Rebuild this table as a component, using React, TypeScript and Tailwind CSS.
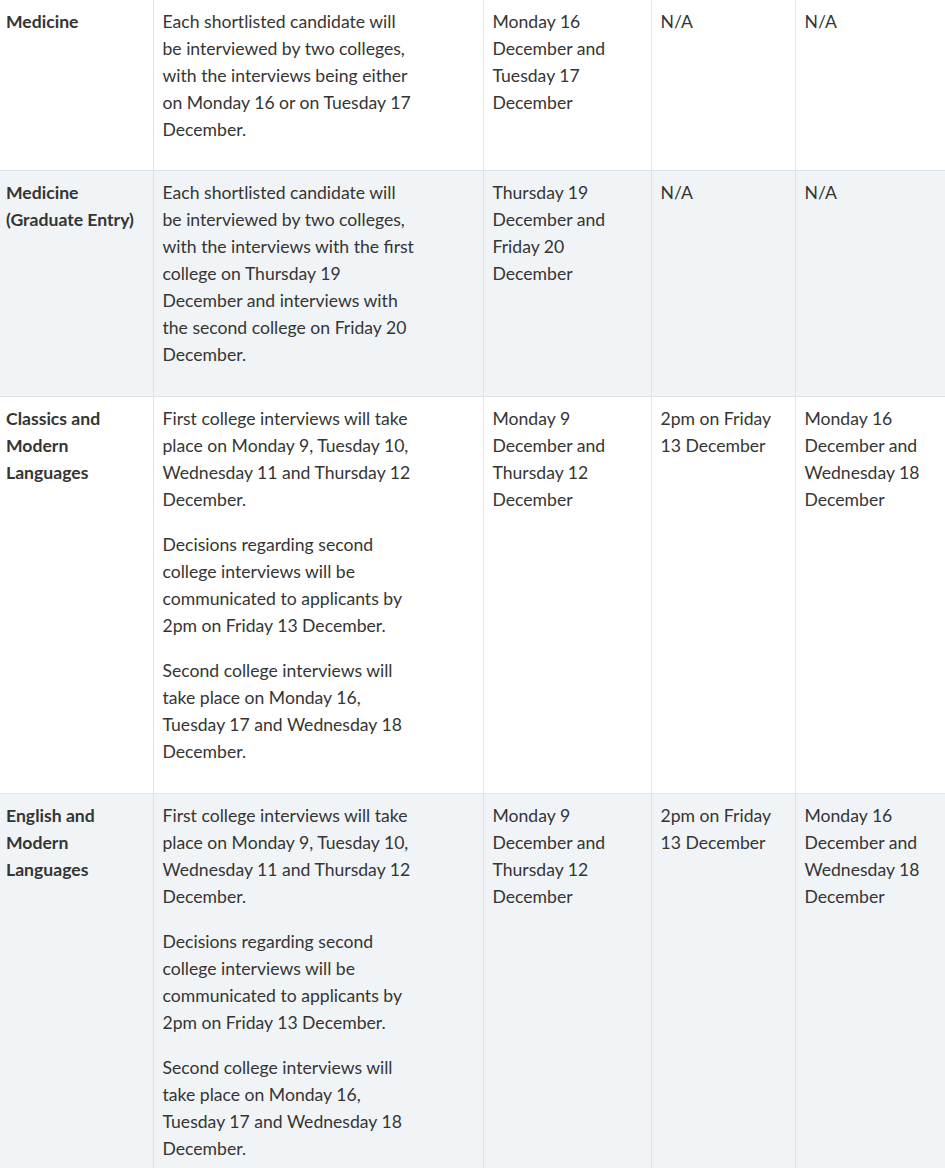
import * as React from "react"

interface Row {
  subject: string[]
  details: string[][]
  first: string[]
  decision: string[]
  second: string[]
}

// line breaks follow the original page's wrapping
const secondRound = {
  first: ["Monday 9", "December and", "Thursday 12", "December"],
  decision: ["2pm on Friday", "13 December"],
  second: ["Monday 16", "December and", "Wednesday 18", "December"],
}

const splitDetails: string[][] = [
  ["First college interviews will take", "place on Monday 9, Tuesday 10,", "Wednesday 11 and Thursday 12", "December."],
  ["Decisions regarding second", "college interviews will be", "communicated to applicants by", "2pm on Friday 13 December."],
  ["Second college interviews will", "take place on Monday 16,", "Tuesday 17 and Wednesday 18", "December."],
]

const rows: Row[] = [
  {
    subject: ["Medicine"],
    details: [
      [
        "Each shortlisted candidate will",
        "be interviewed by two colleges,",
        "with the interviews being either",
        "on Monday 16 or on Tuesday 17",
        "December.",
      ],
    ],
    first: ["Monday 16", "December and", "Tuesday 17", "December"],
    decision: ["N/A"],
    second: ["N/A"],
  },
  {
    subject: ["Medicine", "(Graduate Entry)"],
    details: [
      [
        "Each shortlisted candidate will",
        "be interviewed by two colleges,",
        "with the interviews with the first",
        "college on Thursday 19",
        "December and interviews with",
        "the second college on Friday 20",
        "December.",
      ],
    ],
    first: ["Thursday 19", "December and", "Friday 20", "December"],
    decision: ["N/A"],
    second: ["N/A"],
  },
  { subject: ["Classics and", "Modern", "Languages"], details: splitDetails, ...secondRound },
  { subject: ["English and", "Modern", "Languages"], details: splitDetails, ...secondRound },
]

function Lines({ lines }: { lines: string[] }) {
  return (
    <p className="mb-[18px] whitespace-nowrap">
      {lines.map((l, i) => (
        <React.Fragment key={i}>
          {i > 0 && <br />}
          {l}
        </React.Fragment>
      ))}
    </p>
  )
}

export default function App() {
  const cell = "align-top border-l border-[#dde3e8] pl-[9px] pr-[6px] pt-[8px]"
  return (
    <div className="w-[945px] h-[1168px] overflow-hidden bg-white text-[#353535] text-[17.6px] leading-[27px] font-['Lato','Open_Sans',sans-serif]">
      <table className="w-[945px] table-fixed border-collapse">
        <colgroup>
          <col className="w-[153px]" />
          <col className="w-[330px]" />
          <col className="w-[168px]" />
          <col className="w-[144px]" />
          <col className="w-[150px]" />
        </colgroup>
        <tbody>
          {rows.map((r, i) => {
            const pb = i === 0 ? "pb-[9px]" : "pb-[10px]"
            return (
              <tr key={i} className={`border-b border-[#dde3e8] ${i % 2 ? "bg-[#f0f4f7]" : "bg-white"}`}>
                <td className={`align-top pl-[6px] pr-[6px] pt-[8px] ${pb} font-bold`}>
                  <Lines lines={r.subject} />
                </td>
                <td className={`${cell} ${pb}`}>
                  {r.details.map((d, j) => (
                    <Lines key={j} lines={d} />
                  ))}
                </td>
                <td className={`${cell} ${pb}`}>
                  <Lines lines={r.first} />
                </td>
                <td className={`${cell} ${pb}`}>
                  <Lines lines={r.decision} />
                </td>
                <td className={`${cell} ${pb}`}>
                  <Lines lines={r.second} />
                </td>
              </tr>
            )
          })}
        </tbody>
      </table>
    </div>
  )
}
